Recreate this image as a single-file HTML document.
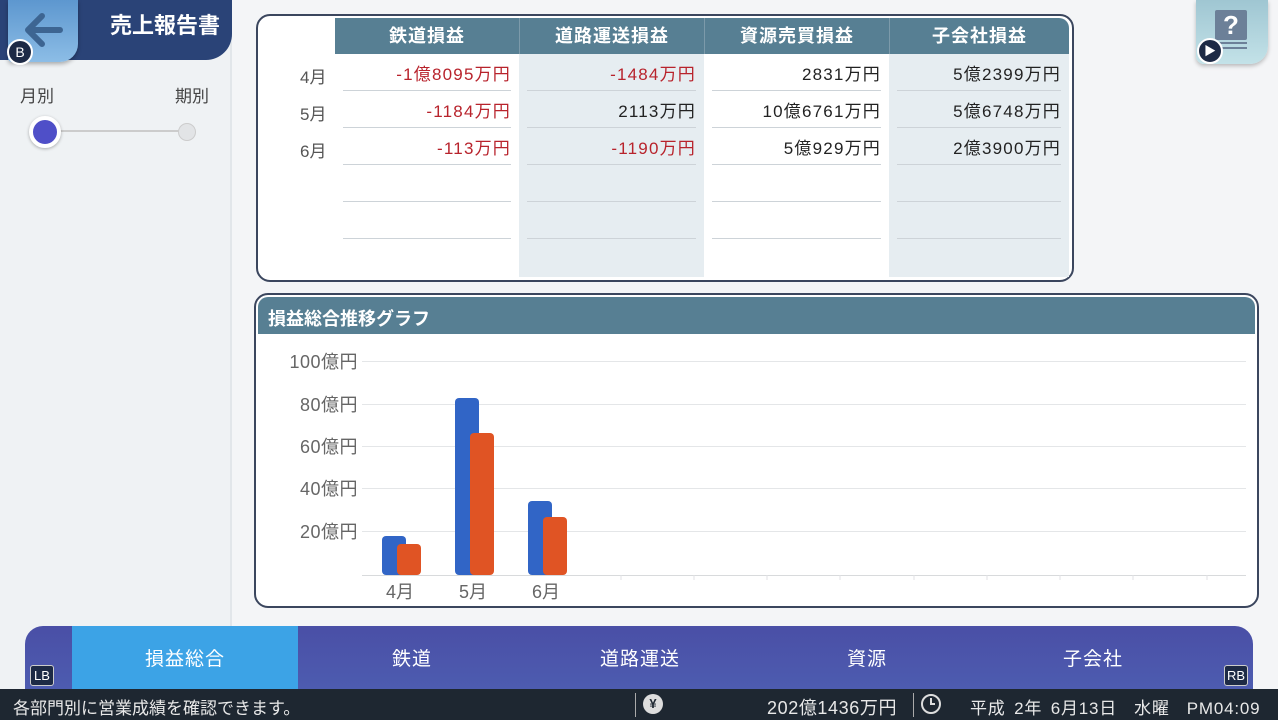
<!DOCTYPE html>
<html><head><meta charset="utf-8"><style>
*{margin:0;padding:0;box-sizing:border-box}
body{width:1278px;height:720px;overflow:hidden;background:#f4f5f7;font-family:"Liberation Sans","Noto Sans CJK JP",sans-serif;position:relative}
.abs{position:absolute}
.side{left:0;top:0;width:232px;height:690px;background:#eff2f4;border-right:2px solid #e2e6ea}
.hdr{left:0;top:0;width:232px;height:60px;background:#2a4377;border-bottom-right-radius:26px}
.back{left:8px;top:0;width:70px;height:62px;background:linear-gradient(#5d97cf,#8cbde6);border-bottom-right-radius:18px;border-bottom-left-radius:4px;box-shadow:0 2px 4px rgba(0,0,0,.3)}
.badge{background:#1d2a45;color:#fff;border:2px solid #fff;border-radius:50%;font-size:14px;text-align:center}
.panel{background:#fff;border:2px solid #3b465e;border-radius:14px}
.th{top:18px;height:36px;background:#577f93;color:#fff;font-size:18px;letter-spacing:1px;text-align:center;line-height:36px;font-weight:bold;border-left:1px solid #7c9aaa}
.col{top:54px;height:223px}
.cell{font-size:17px;letter-spacing:1.2px;text-align:right;height:37px;line-height:41px;border-bottom:1px solid #cdd3d8;margin:0 8px;padding-right:0;color:#222}
.r{color:#b8232c}
.ml{left:300px;font-size:17px;color:#555}
.yl{font-size:18px;letter-spacing:.5px;color:#666;width:92px;text-align:right;left:266px}
.gl{left:362px;width:884px;height:1px;background:#e4e6e8}
.tab{top:626px;height:64px;color:#fff;font-size:19px;letter-spacing:1px;text-align:center;line-height:68px}
.xl{top:578px;font-size:18px;color:#666}
</style></head><body>
<div class="abs side"></div>
<div class="abs hdr"></div>
<div class="abs" style="left:110px;top:8px;color:#fff;font-size:22px;font-weight:bold">売上報告書</div>
<div class="abs back"></div>
<svg class="abs" style="left:22px;top:10px" width="44" height="40"><path d="M38 20H8M20 6L6 20L20 34" stroke="#3d6592" stroke-width="6" fill="none" stroke-linecap="round" stroke-linejoin="round"/></svg>
<div class="abs badge" style="left:7px;top:39px;width:26px;height:26px;line-height:22px">B</div>
<div class="abs" style="left:20px;top:82px;font-size:17px;color:#444">月別</div>
<div class="abs" style="left:175px;top:82px;font-size:17px;color:#444">期別</div>
<div class="abs" style="left:46px;top:130px;width:140px;height:2px;background:#ccc"></div>
<div class="abs" style="left:178px;top:123px;width:18px;height:18px;border-radius:50%;background:#e2e4e6;border:1px solid #ccc"></div>
<div class="abs" style="left:29px;top:116px;width:32px;height:32px;border-radius:50%;background:#4f4fc8;border:4px solid #fff;box-shadow:0 1px 3px rgba(0,0,0,.3)"></div>

<div class="abs" style="left:1196px;top:0;width:72px;height:64px;background:linear-gradient(#9fc6d2,#c3e2e8);border-bottom-left-radius:8px;border-bottom-right-radius:18px;box-shadow:0 2px 4px rgba(0,0,0,.25)"></div>
<div class="abs" style="left:1215px;top:10px;width:32px;height:30px;background:#6c8098;color:#fff;font-size:26px;font-weight:bold;text-align:center;line-height:30px;border-radius:2px">?</div>
<div class="abs" style="left:1215px;top:42px;width:32px;height:2px;background:#6c8098"></div>
<div class="abs" style="left:1215px;top:47px;width:32px;height:2px;background:#6c8098"></div>
<div class="abs badge" style="left:1197px;top:38px;width:26px;height:26px;line-height:22px;font-size:12px">▶</div>

<div class="abs panel" style="left:256px;top:14px;width:818px;height:268px"></div>
<div class="abs" style="left:519px;top:54px;width:185px;height:223px;background:#e6edf1"></div>
<div class="abs" style="left:889px;top:54px;width:180px;height:223px;background:#e6edf1"></div>
<div class="abs th" style="left:335px;width:184px;border-left:none">鉄道損益</div>
<div class="abs th" style="left:519px;width:185px">道路運送損益</div>
<div class="abs th" style="left:704px;width:185px">資源売買損益</div>
<div class="abs th" style="left:889px;width:180px;border-top-right-radius:10px">子会社損益</div>
<div class="abs ml" style="top:63px">4月</div>
<div class="abs ml" style="top:100px">5月</div>
<div class="abs ml" style="top:137px">6月</div>
<div class="abs col" style="left:335px;width:184px"><div class="cell r">-1億8095万円</div><div class="cell r">-1184万円</div><div class="cell r">-113万円</div><div class="cell"></div><div class="cell"></div></div>
<div class="abs col" style="left:519px;width:185px"><div class="cell r">-1484万円</div><div class="cell">2113万円</div><div class="cell r">-1190万円</div><div class="cell"></div><div class="cell"></div></div>
<div class="abs col" style="left:704px;width:185px"><div class="cell">2831万円</div><div class="cell">10億6761万円</div><div class="cell">5億929万円</div><div class="cell"></div><div class="cell"></div></div>
<div class="abs col" style="left:889px;width:180px"><div class="cell">5億2399万円</div><div class="cell">5億6748万円</div><div class="cell">2億3900万円</div><div class="cell"></div><div class="cell"></div></div>

<div class="abs panel" style="left:254px;top:293px;width:1005px;height:315px"></div>
<div class="abs" style="left:258px;top:297px;width:997px;height:37px;background:#577f93;border-top-left-radius:10px;border-top-right-radius:10px"></div>
<div class="abs" style="left:268px;top:305px;color:#fff;font-size:18px;font-weight:bold">損益総合推移グラフ</div>
<div class="abs yl" style="top:348px">100億円</div>
<div class="abs yl" style="top:391px">80億円</div>
<div class="abs yl" style="top:433px">60億円</div>
<div class="abs yl" style="top:475px">40億円</div>
<div class="abs yl" style="top:518px">20億円</div>
<div class="abs gl" style="top:361px"></div><div class="abs gl" style="top:404px"></div><div class="abs gl" style="top:446px"></div><div class="abs gl" style="top:488px"></div><div class="abs gl" style="top:531px"></div>
<div class="abs gl" style="top:575px;background:#d8dadc"></div>
<svg class="abs" style="left:0;top:0" width="1278" height="600">
<g stroke="#e0e2e4"><line x1="621" y1="575" x2="621" y2="580"/><line x1="694" y1="575" x2="694" y2="580"/><line x1="767" y1="575" x2="767" y2="580"/><line x1="840" y1="575" x2="840" y2="580"/><line x1="914" y1="575" x2="914" y2="580"/><line x1="987" y1="575" x2="987" y2="580"/><line x1="1060" y1="575" x2="1060" y2="580"/><line x1="1133" y1="575" x2="1133" y2="580"/><line x1="1207" y1="575" x2="1207" y2="580"/></g>
<g fill="#3165c6"><rect x="382" y="536" width="24" height="39" rx="4"/><rect x="455" y="398" width="24" height="177" rx="4"/><rect x="528" y="501" width="24" height="74" rx="4"/></g>
<g fill="#e05424"><rect x="397" y="544" width="24" height="31" rx="4"/><rect x="470" y="433" width="24" height="142" rx="4"/><rect x="543" y="517" width="24" height="58" rx="4"/></g>
</svg>
<div class="abs xl" style="left:386px">4月</div>
<div class="abs xl" style="left:459px">5月</div>
<div class="abs xl" style="left:532px">6月</div>

<div class="abs" style="left:25px;top:626px;width:1228px;height:64px;background:linear-gradient(#4a4fa6,#4d5cb0);border-top-left-radius:18px;border-top-right-radius:18px"></div>
<div class="abs tab" style="left:72px;width:226px;background:#3ca3e6">損益総合</div>
<div class="abs tab" style="left:298px;width:228px">鉄道</div>
<div class="abs tab" style="left:526px;width:228px">道路運送</div>
<div class="abs tab" style="left:754px;width:226px">資源</div>
<div class="abs tab" style="left:980px;width:226px">子会社</div>
<div class="abs" style="left:30px;top:665px;width:24px;height:21px;background:#1d2a45;color:#fff;border:1px solid #ccc;border-radius:3px;font-size:13px;text-align:center;line-height:19px">LB</div>
<div class="abs" style="left:1224px;top:665px;width:24px;height:21px;background:#1d2a45;color:#fff;border:1px solid #ccc;border-radius:3px;font-size:13px;text-align:center;line-height:19px">RB</div>

<div class="abs" style="left:0;top:689px;width:1278px;height:31px;background:#1e2731"></div>
<div class="abs" style="left:13px;top:694px;color:#e8e8e8;font-size:17px">各部門別に営業成績を確認できます。</div>
<div class="abs" style="left:635px;top:693px;width:1px;height:24px;background:#aaa"></div>
<div class="abs" style="left:643px;top:694px;width:20px;height:20px;border-radius:50%;background:#ddd;color:#1e2731;font-size:13px;font-weight:bold;text-align:center;line-height:20px">¥</div>
<div class="abs" style="left:767px;top:694px;color:#e8e8e8;font-size:18px;letter-spacing:.6px">202億1436万円</div>
<div class="abs" style="left:913px;top:693px;width:1px;height:24px;background:#aaa"></div>
<svg class="abs" style="left:920px;top:693px" width="22" height="22"><circle cx="11" cy="11" r="9" stroke="#ddd" stroke-width="2" fill="none"/><path d="M11 5V11H15" stroke="#ddd" stroke-width="2" fill="none"/></svg>
<div class="abs" style="left:970px;top:694px;color:#e8e8e8;font-size:17px;letter-spacing:.8px;word-spacing:3px;white-space:nowrap">平成 2年 6月13日&nbsp; 水曜&nbsp; PM04:09</div>
</body></html>
